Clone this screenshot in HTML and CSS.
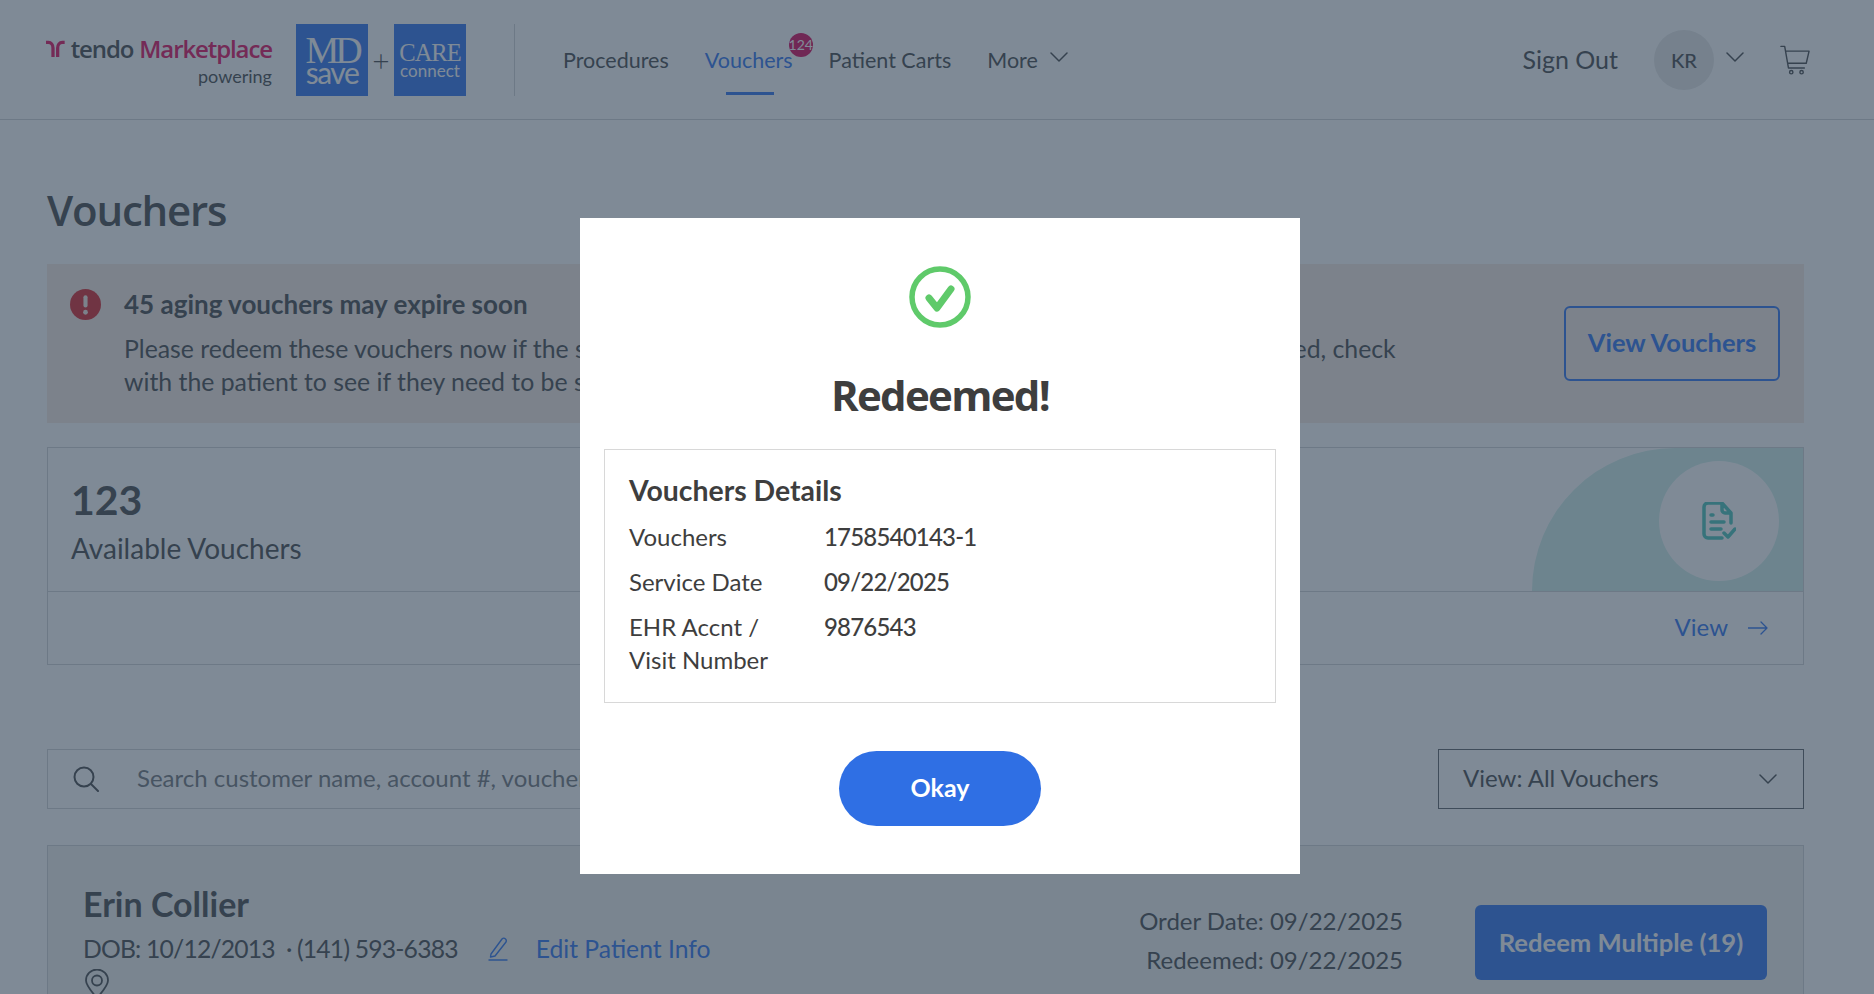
FILE: index.html
```html
<!DOCTYPE html>
<html lang="en">
<head>
    <meta charset="UTF-8">
    <title>Vouchers</title>
    <link rel="stylesheet" href="styles.css">
</head>
<body>
    <header class="topbar">
        <div class="brand">
            <div class="brand-tendo">
                <div class="tendo-line">
                    <svg class="tendo-mark" viewBox="0 0 20 18"><path d="M0 2.500h2.500C5.500 2.500 7.500 5 7.500 8.500V18M20 2.500h-2.500c-3 0-5 2.500-5 6V18"/></svg>
                    <span class="tendo-name">tendo</span>
                    <span class="tendo-market">Marketplace</span>
                </div>
                <div class="tendo-sub">powering</div>
            </div>
            <div class="logo-box logo-md">
                <span class="md-big">MD</span>
                <span class="md-save">save</span>
            </div>
            <span class="logo-plus">+</span>
            <div class="logo-box logo-care">
                <span class="care-big">CARE</span>
                <span class="care-small">connect</span>
            </div>
        </div>
        <nav class="mainnav">
            <a href="#">Procedures</a>
            <a href="#" class="current">Vouchers<span class="badge">124</span></a>
            <a href="#">Patient Carts</a>
            <a href="#">More
                <svg class="chev" viewBox="0 0 18 10"><path d="M1 1l8 8 8-8"/></svg>
            </a>
        </nav>
        <div class="userbar">
            <a href="#" class="signout">Sign Out</a>
            <span class="avatar">KR</span>
            <svg class="chev user-chev" viewBox="0 0 18 10"><path d="M1 1l8 8 8-8"/></svg>
            <svg class="cart" viewBox="0 0 32 31"><path d="M1 1h4l4 23h17M6 6h25l-3 13H8M10 24"/><circle cx="12" cy="28.500" r="1.800"/><circle cx="23" cy="28.500" r="1.800"/></svg>
        </div>
    </header>

    <main class="page">
        <h1 class="page-title">Vouchers</h1>

        <section class="alert">
            <svg class="alert-icon" viewBox="0 0 30 30"><circle cx="15" cy="15" r="15"/><rect class="alert-mark" x="13" y="6" width="4" height="12" rx="2"/><circle class="alert-mark" cx="15" cy="22.500" r="2.300"/></svg>
            <div class="alert-body">
                <h3>45 aging vouchers may expire soon</h3>
                <p>Please redeem these vouchers now if the services have been performed. If the service has not been performed, check<br>with the patient to see if they need to be seen.</p>
            </div>
            <a href="#" class="btn-outline">View Vouchers</a>
        </section>

        <section class="stat">
            <div class="stat-top">
                <div class="stat-num">123</div>
                <div class="stat-label">Available Vouchers</div>
                <div class="stat-arc">
                    <span class="stat-circle">
                        <svg viewBox="0 0 34 38"><path d="M20 1H6a4 4 0 0 0-4 4v27a4 4 0 0 0 4 4h14M20 1l9 10v10M20 1v7a3 3 0 0 0 3 3h6M9 13h2M9 20h13M9 27h10M22 31l4 4 7-8"/></svg>
                    </span>
                </div>
            </div>
            <div class="stat-foot">
                <a href="#">View
                    <svg viewBox="0 0 20 14"><path d="M0 7h19M13 1l6 6-6 6"/></svg>
                </a>
            </div>
        </section>

        <div class="filters">
            <div class="search">
                <svg viewBox="0 0 26 26"><circle cx="11" cy="11" r="9.500"/><path d="M18 18l7 7"/></svg>
                <span>Search customer name, account #, voucher #</span>
            </div>
            <div class="select">
                <span>View: All Vouchers</span>
                <svg class="chev" viewBox="0 0 18 10"><path d="M1 1l8 8 8-8"/></svg>
            </div>
        </div>

        <section class="patient">
            <div class="patient-info">
                <h2>Erin Collier</h2>
                <div class="patient-line">
                    <span class="patient-dob">DOB: 10/12/2013 &nbsp;·&nbsp;(141) 593-6383</span>
                    <svg class="pencil" viewBox="0 0 20 24"><path d="M3 17L14 2c1-1 2.500-1 3.500 0s1 2 .5 3L7 19l-4.500 1zM1 23h18"/></svg>
                    <a href="#">Edit Patient Info</a>
                </div>
                <svg class="pin" viewBox="0 0 24 30"><path d="M12 29C5 21 1 16 1 11.500a11 11 0 0 1 22 0C23 16 19 21 12 29z"/><circle cx="12" cy="11.500" r="5"/></svg>
            </div>
            <div class="patient-dates">
                <div>Order Date: 09/22/2025</div>
                <div>Redeemed: 09/22/2025</div>
            </div>
            <a href="#" class="btn-solid">Redeem Multiple (19)</a>
        </section>
    </main>

    <div class="overlay">
        <div class="modal">
            <svg class="modal-check" viewBox="0 0 62 62"><circle cx="31" cy="31" r="28"/><path class="check-tick" d="M20 32l8 10 14-19"/></svg>
            <h2 class="modal-title">Redeemed!</h2>
            <div class="details">
                <h4>Vouchers Details</h4>
                <div class="detail-row"><span>Vouchers</span><strong>1758540143-1</strong></div>
                <div class="detail-row"><span>Service Date</span><strong>09/22/2025</strong></div>
                <div class="detail-row"><span>EHR Accnt /<br>Visit Number</span><strong>9876543</strong></div>
            </div>
            <a href="#" class="btn-okay">Okay</a>
        </div>
    </div>
</body>
</html>
```

FILE: styles.css
```css
html, body {
    height: 100%;
}

body {
    margin: 0;
    overflow: hidden;
    background: #fff;
    color: #6c6f71;
    font-family: "Lato", "Liberation Sans", sans-serif;
    font-size: 24px;
}

a {
    text-decoration: none;
    color: inherit;
}

h1, h2, h3, h4, p {
    margin: 0;
}

svg {
    fill: none;
    stroke: currentColor;
    stroke-linecap: round;
    stroke-linejoin: round;
}

/* top bar */
.topbar {
    display: flex;
    align-items: center;
    height: 120px;
    box-sizing: border-box;
    padding: 0 64px 0 46px;
    border-bottom: 1px solid #dadddf;
}

.brand {
    display: flex;
    align-items: center;
    height: 72px;
    padding-right: 48px;
    border-right: 1px solid #dadddf;
}

.brand-tendo {
    width: 226px;
    margin-right: 24px;
    text-align: right;
}

.tendo-line {
    display: flex;
    align-items: center;
    justify-content: flex-end;
    font-family: "Open Sans", sans-serif;
    font-size: 24px;
    font-weight: 600;
    letter-spacing: -1.100px;
    line-height: 32px;
}

.tendo-mark {
    width: 21px;
    height: 19px;
    margin-right: 6px;
    color: #e8407f;
    stroke-width: 3.500;
    stroke-linecap: butt;
}

.tendo-name {
    margin-right: 6px;
}

.tendo-market {
    color: #e8407f;
}

.tendo-sub {
    font-size: 18px;
    line-height: 22px;
}

.logo-box {
    display: flex;
    flex-direction: column;
    align-items: center;
    width: 72px;
    height: 72px;
    background: #5a91f3;
    color: #fff;
}

.md-big {
    font-family: "Liberation Serif", serif;
    font-size: 38px;
    line-height: 36px;
    letter-spacing: -4px;
    margin-top: 8px;
}

.md-save {
    font-size: 30px;
    line-height: 24px;
    letter-spacing: -1.500px;
    margin-top: -8px;
}

.logo-plus {
    width: 26px;
    text-align: center;
    font-size: 30px;
    font-weight: 300;
}

.care-big {
    font-family: "Liberation Serif", serif;
    font-size: 24.500px;
    line-height: 24px;
    letter-spacing: -1px;
    margin-top: 17px;
}

.care-small {
    font-size: 17px;
    line-height: 14px;
    margin-top: -1px;
}

.mainnav {
    display: flex;
    align-items: center;
    gap: 36px;
    height: 100%;
    padding-left: 48px;
    font-size: 21.500px;
}

.mainnav a {
    position: relative;
    display: flex;
    align-items: center;
}

.mainnav .current {
    color: #5a91f3;
}

/* underline sits below the nav word */
.mainnav .current::after {
    content: "";
    position: absolute;
    left: 21px;
    right: 19px;
    top: 45px;
    height: 3px;
    background: #5a91f3;
}

.badge {
    position: absolute;
    top: -14px;
    right: -20px;
    width: 24px;
    height: 24px;
    border-radius: 50%;
    background: #e03a7c;
    color: #fff;
    font-size: 14px;
    line-height: 24px;
    text-align: center;
}

.chev {
    width: 18px;
    height: 10px;
    stroke-width: 1.500;
}

.mainnav .chev {
    margin: -6px 0 0 12px;
}

.userbar {
    display: flex;
    align-items: center;
    margin-left: auto;
}

.signout {
    font-size: 25px;
    margin: 0 36px 2px 0;
}

.avatar {
    width: 60px;
    height: 60px;
    border-radius: 50%;
    background: #eceded;
    font-size: 20px;
    font-weight: 500;
    line-height: 60px;
    text-align: center;
}

.user-chev {
    margin: -6px 36px 0 12px;
}

.cart {
    width: 30px;
    height: 30px;
    stroke-width: 1.500;
}

/* page */
.page {
    padding: 0 70px 0 47px;
}

.page-title {
    margin-top: 62px;
    font-family: "Open Sans", sans-serif;
    font-size: 42px;
    font-weight: 600;
    letter-spacing: -1.200px;
    line-height: 56px;
}

.alert {
    display: flex;
    align-items: flex-start;
    box-sizing: border-box;
    height: 159px;
    margin-top: 26px;
    padding: 25px 24px 0 23px;
    background: #f8efe9;
}

.alert-icon {
    flex: none;
    width: 31px;
    height: 31px;
    margin-right: 23px;
    fill: #e05358;
    stroke: none;
}

.alert-mark {
    fill: #f8efe9;
}

.alert-body {
    width: 1290px;
    box-sizing: border-box;
    font-size: 24.800px;
    line-height: 33px;
}

.alert-body h3 {
    font-size: 26px;
    font-weight: 700;
    line-height: 30px;
    margin-bottom: 13px;
}

.btn-outline {
    margin: 17px 0 0 auto;
    box-sizing: border-box;
    width: 216px;
    height: 75px;
    border: 2px solid #5a91f3;
    border-radius: 6px;
    color: #5a91f3;
    font-size: 25.500px;
    font-weight: 700;
    line-height: 68px;
    text-align: center;
}

.stat {
    margin-top: 24px;
    border: 1px solid #dadddf;
}

.stat-top {
    position: relative;
    height: 144px;
    box-sizing: border-box;
    padding: 26px 23px 0;
    border-bottom: 1px solid #dadddf;
}

.stat-num {
    font-size: 41px;
    font-weight: 700;
    line-height: 52px;
}

.stat-label {
    font-size: 28px;
    line-height: 44px;
}

.stat-arc {
    position: absolute;
    right: 0;
    bottom: 0;
    width: 271px;
    height: 143px;
    border-top-left-radius: 145px;
    background: #daf3ef;
}

.stat-circle {
    position: absolute;
    top: 13px;
    left: 127px;
    display: flex;
    align-items: center;
    justify-content: center;
    width: 120px;
    height: 120px;
    border-radius: 50%;
    background: #fff;
    color: #6fd0c8;
}

.stat-circle svg {
    width: 34px;
    height: 38px;
    stroke-width: 3.500;
}

.stat-foot {
    display: flex;
    justify-content: flex-end;
    align-items: center;
    box-sizing: border-box;
    height: 72px;
    padding: 0 35px 4px 0;
}

.stat-foot a {
    display: flex;
    align-items: center;
    color: #5a91f3;
}

.stat-foot svg {
    width: 20px;
    height: 14px;
    margin: 4px 0 0 20px;
    stroke-width: 1.300;
}

.filters {
    display: flex;
    justify-content: space-between;
    margin-top: 84px;
}

.search {
    display: flex;
    align-items: center;
    width: 1200px;
    height: 60px;
    box-sizing: border-box;
    padding-left: 25px;
    border: 1px solid #dadddf;
    color: #8f9397;
}

.search span {
    margin-bottom: 4px;
}

.search svg {
    width: 26px;
    height: 26px;
    margin-right: 38px;
    color: #6c6f71;
    stroke-width: 2;
}

.select {
    display: flex;
    align-items: center;
    justify-content: space-between;
    width: 366px;
    height: 60px;
    box-sizing: border-box;
    padding: 0 26px 0 24px;
    border: 1px solid #7e8387;
}

.select span {
    margin-bottom: 3px;
}

/* the card runs off the bottom of the window */
.patient {
    display: flex;
    align-items: flex-start;
    height: 149px;
    overflow: hidden;
    margin-top: 36px;
    box-sizing: border-box;
    padding: 37px 36px 0 35px;
    border: 1px solid #dadddf;
    border-bottom: 0;
    background: #f4f5f3;
}

.patient-info {
    flex: 1;
}

.patient-info h2 {
    font-size: 34px;
    font-weight: 700;
    line-height: 42px;
}

.patient-line {
    display: flex;
    align-items: center;
    margin-top: 6px;
    font-size: 24.700px;
    line-height: 36px;
}

.patient-dob {
    letter-spacing: -.8px;
}

.patient-line a {
    color: #5a91f3;
}

.pencil {
    width: 20px;
    height: 24px;
    margin: 0 28px 0 30px;
    color: #5a91f3;
    stroke-width: 1.400;
}

.pin {
    display: block;
    width: 24px;
    height: 30px;
    margin: 2px 0 0 2px;
    stroke-width: 1.800;
}

.patient-dates {
    margin: 18px 72px 0 0;
    text-align: right;
    line-height: 39px;
}

.btn-solid {
    margin-top: 22px;
    width: 292px;
    height: 75px;
    border-radius: 6px;
    background: #5a91f3;
    color: #fff;
    font-size: 25.600px;
    font-weight: 700;
    line-height: 75px;
    text-align: center;
}

/* modal */
.overlay {
    position: fixed;
    inset: 0;
    display: flex;
    align-items: flex-start;
    padding: 218px 0 0 580px;
    background: rgba(0, 21, 45, .5);
}

.modal {
    display: flex;
    flex-direction: column;
    align-items: center;
    box-sizing: border-box;
    width: 720px;
    height: 656px;
    padding: 48px 24px 0;
    background: #fff;
    color: #3e3e3e;
}

.modal-check {
    width: 62px;
    height: 62px;
    color: #5fca6a;
    stroke-width: 5.500;
}

.check-tick {
    stroke-width: 7;
}

.modal-title {
    margin-top: 32px;
    font-family: "Open Sans", sans-serif;
    font-size: 42px;
    font-weight: 700;
    letter-spacing: -1.700px;
    line-height: 70px;
}

.details {
    align-self: stretch;
    box-sizing: border-box;
    height: 254px;
    margin-top: 19px;
    padding: 22px 24px 0;
    border: 1px solid #d8d8d8;
}

.details h4 {
    font-size: 28.400px;
    font-weight: 700;
    line-height: 36px;
    margin-bottom: 12px;
}

.detail-row {
    display: flex;
    margin-bottom: 12px;
    line-height: 33px;
}

.detail-row span {
    width: 195px;
}

.detail-row strong {
    font-weight: 500;
    letter-spacing: -.8px;
}

.btn-okay {
    width: 202px;
    height: 75px;
    margin-top: 48px;
    border-radius: 38px;
    background: #2f6fe4;
    color: #fff;
    font-size: 25px;
    font-weight: 700;
    line-height: 73px;
    text-align: center;
}
```
